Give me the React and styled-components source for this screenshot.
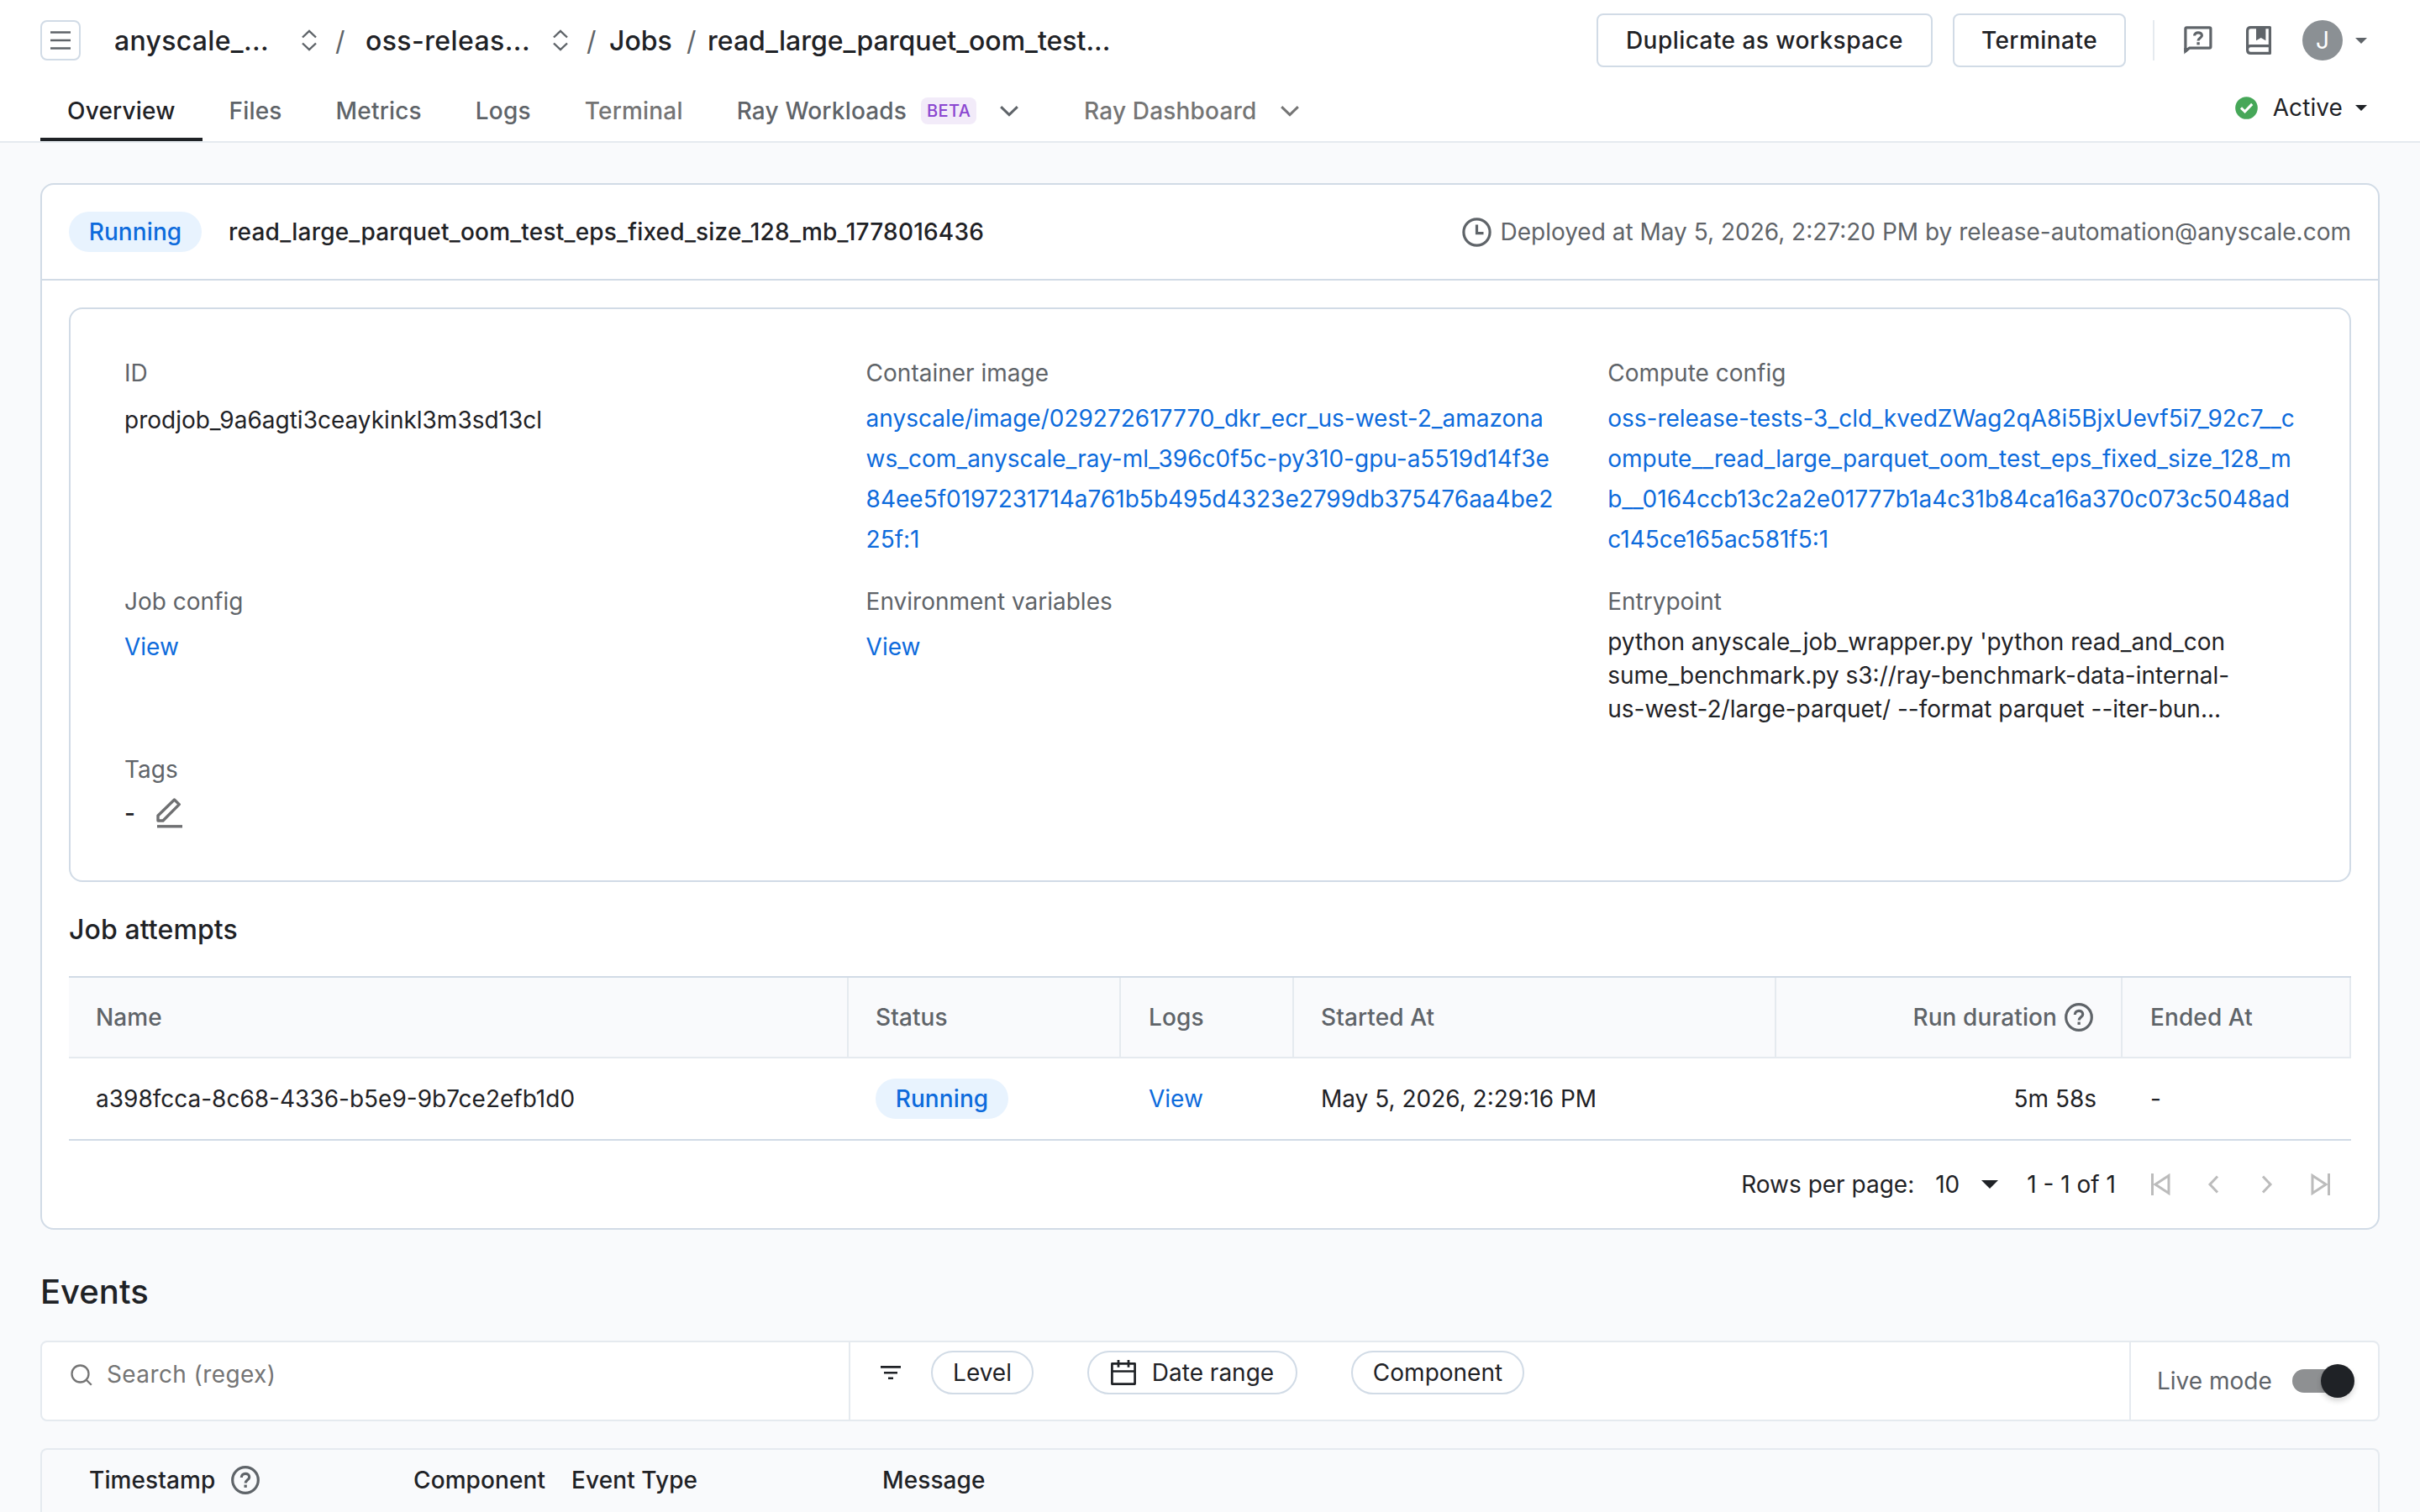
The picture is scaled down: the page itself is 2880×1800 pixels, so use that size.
import React from "react";
import styled, { createGlobalStyle } from "styled-components";

const c = {
  ink: "#1f2226",
  muted: "#5f6469",
  faint: "#757575",
  link: "#0d6bdc",
  line: "#d1dbe6",
  soft: "#e5eaef",
  bg: "#f9fafc",
};

const GlobalStyle = createGlobalStyle`
  * { box-sizing: border-box; }
  body {
    margin: 0;
    background: ${c.bg};
    color: ${c.ink};
    font-family: Inter, "Liberation Sans", sans-serif;
    font-size: 28px;
    line-height: 40px;
    letter-spacing: 0;
    -webkit-font-smoothing: antialiased;
  }
  svg { display: block; flex: none; }
`;

const Page = styled.div`
  width: 2880px;
  height: 1800px;
  overflow: hidden;
  display: flex;
  flex-direction: column;
`;

/* ---------- header ---------- */
const Header = styled.header`
  height: 170px;
  flex: none;
  background: #fff;
  border-bottom: 2px solid ${c.soft};
  padding: 0 48px;
  display: flex;
  justify-content: space-between;
`;
const HeaderLeft = styled.div`
  display: flex;
  flex-direction: column;
`;
const HeaderRight = styled.div`
  display: flex;
  flex-direction: column;
  align-items: flex-end;
`;
const CrumbBar = styled.div`
  height: 96px;
  display: flex;
  align-items: center;
  font-size: 32px;
  font-weight: 500;
`;
const MenuButton = styled.button`
  width: 48px;
  height: 48px;
  padding: 0;
  margin-right: 40px;
  border: 2px solid ${c.line};
  border-radius: 8px;
  background: #fff;
  display: flex;
  align-items: center;
  justify-content: center;
`;
const Crumb = styled.span`
  width: ${(p) => p.$w}px;
  padding-top: 2px;
  letter-spacing: ${(p) => p.$ls || 0}px;
  white-space: nowrap;
`;
const Slash = styled.span`
  width: ${(p) => p.$w}px;
  padding: 2px 0 0 ${(p) => p.$pad}px;
  color: ${c.muted};
  font-weight: 400;
`;
const Tabs = styled.nav`
  height: 72px;
  display: flex;
`;
const Tab = styled.a`
  height: 72px;
  padding: 4px 32px 0;
  display: flex;
  align-items: center;
  font-weight: 500;
  letter-spacing: 0.18px;
  white-space: nowrap;
  color: ${(p) => (p.$active ? c.ink : p.$disabled ? c.faint : c.muted)};
  border-bottom: 4px solid ${(p) => (p.$active ? c.ink : "transparent")};
`;
const Beta = styled.span`
  height: 32px;
  width: 66px;
  margin-left: 17px;
  display: flex;
  align-items: center;
  justify-content: center;
  border-radius: 8px;
  background: #f2ebf9;
  color: #8a46d0;
  font-size: 20px;
  letter-spacing: 0.4px;
  font-weight: 500;
`;
const TabCaret = styled.span`
  margin: 0 14px 0 28px;
`;
const Actions = styled.div`
  height: 96px;
  display: flex;
  align-items: center;
  padding-right: 15px;
`;
const Button = styled.button`
  height: 64px;
  width: ${(p) => p.$w}px;
  padding: 0;
  margin-right: ${(p) => p.$mr}px;
  border: 2px solid ${c.line};
  border-radius: 8px;
  background: #fff;
  color: ${c.ink};
  font: inherit;
  font-weight: 500;
  letter-spacing: 0.45px;
`;
const Divider = styled.span`
  width: 2px;
  height: 48px;
  margin-right: 35px;
  background: ${c.soft};
`;
const IconSlot = styled.span`
  margin-right: 40px;
`;
const Avatar = styled.span`
  width: 48px;
  height: 48px;
  margin: 0 15px 0 37px;
  border-radius: 50%;
  background: #8b9094;
  color: #fff;
  display: flex;
  align-items: center;
  justify-content: center;
`;
const StatusLine = styled.div`
  height: 64px;
  padding-right: 15px;
  display: flex;
  align-items: center;
`;
const StatusText = styled.span`
  margin: 0 15px 0 18px;
  letter-spacing: 0.1px;
`;

/* ---------- main ---------- */
const Main = styled.main`
  padding: 48px 48px 0;
  display: flex;
  flex-direction: column;
`;
const Card = styled.section`
  height: 1246px;
  border: 2px solid ${c.line};
  border-radius: 16px;
  background: #fff;
`;
const CardHead = styled.div`
  height: 114px;
  padding: 0 32px;
  border-bottom: 2px solid ${c.line};
  display: flex;
  align-items: center;
`;
const Badge = styled.span`
  height: 48px;
  width: 158px;
  display: inline-flex;
  align-items: center;
  justify-content: center;
  border-radius: 24px;
  background: #e8f3fe;
  color: ${c.link};
  font-weight: 500;
  letter-spacing: 0.1px;
`;
const JobTitle = styled.span`
  margin-left: 32px;
  font-weight: 500;
  letter-spacing: 0.2px;
`;
const Deployed = styled.span`
  margin-left: auto;
  display: flex;
  align-items: center;
  gap: 10px;
  color: ${c.muted};
`;
const CardBody = styled.div`
  padding: 32px 32px 0;
`;
const Details = styled.div`
  height: 684px;
  padding: 56px 0 0 64px;
  border: 2px solid ${c.line};
  border-radius: 16px;
  display: grid;
  grid-template-columns: repeat(3, 882.6px);
  grid-template-rows: 240px 168px 120px;
  row-gap: 32px;
  overflow: hidden;
`;
const Field = styled.div`
  white-space: nowrap;
`;
const Label = styled.div`
  color: ${c.muted};
`;
const Value = styled.div`
  margin-top: ${(p) => p.$mt || 0}px;
  display: flex;
  align-items: center;
`;
const Lines = styled.div`
  margin-top: ${(p) => p.$mt || 0}px;
  line-height: ${(p) => p.$lh}px;
  color: ${(p) => (p.$link ? c.link : c.ink)};
  white-space: pre-line;
`;
const Dash = styled.span`
  width: 38px;
  font-weight: 500;
`;
const SubHeading = styled.h2`
  margin: 36px 0 34px;
  font-size: 32px;
  line-height: 42px;
  font-weight: 500;
  letter-spacing: 0.1px;
`;
const COLS = "928px 324px 206px 574px 412px 272px";
const TableHead = styled.div`
  height: 98px;
  display: grid;
  grid-template-columns: ${COLS};
  background: ${c.bg};
  border-top: 2px solid ${c.line};
  border-bottom: 2px solid ${c.soft};
`;
const HeadCell = styled.div`
  padding: 0 33px 0 ${(p) => p.$pl || 32}px;
  border-right: 2px solid ${c.soft};
  color: ${c.muted};
  font-weight: 500;
  letter-spacing: 0.1px;
  display: flex;
  align-items: center;
  gap: 9px;
  justify-content: ${(p) => (p.$right ? "flex-end" : "flex-start")};
`;
const TableRow = styled.div`
  height: 98px;
  display: grid;
  grid-template-columns: ${COLS};
  border-bottom: 2px solid ${c.line};
`;
const Cell = styled.div`
  padding: 0 31px 0 ${(p) => p.$pl || 32}px;
  display: flex;
  align-items: center;
  color: ${(p) => (p.$link ? c.link : c.ink)};
  justify-content: ${(p) => (p.$right ? "flex-end" : "flex-start")};
`;
const Pager = styled.div`
  height: 104px;
  display: flex;
  align-items: center;
  justify-content: flex-end;
  padding-right: 25px;
`;
const PagerText = styled.span`
  margin: 0 ${(p) => p.$mr}px 0 ${(p) => p.$ml || 0}px;
`;
const PagerIcons = styled.div`
  display: grid;
  grid-template-columns: 67px 64px 59px 23px;
  align-items: center;
`;

/* ---------- events ---------- */
const Title = styled.h1`
  margin: 49px 0 33px;
  font-size: 40px;
  line-height: 50px;
  font-weight: 500;
`;
const FilterBar = styled.div`
  height: 96px;
  border: 2px solid ${c.soft};
  border-radius: 8px;
  background: #fff;
  display: flex;
`;
const SearchBox = styled.div`
  width: 962px;
  height: 100%;
  border-right: 2px solid ${c.soft};
  padding: 18px 0 0 34px;
  display: flex;
  align-items: flex-start;
  gap: 17px;
  color: ${c.faint};
  letter-spacing: 0.4px;
`;
const SearchIconBox = styled.span`
  padding-top: 8px;
`;
const Filters = styled.div`
  flex: 1;
  padding: 10px 0 0 36px;
  display: flex;
  align-items: flex-start;
`;
const FilterIconBox = styled.span`
  height: 52px;
  display: flex;
  align-items: center;
  margin-right: 36px;
`;
const Pill = styled.span`
  width: ${(p) => p.$w}px;
  height: 52px;
  margin-right: 64px;
  border: 2px solid ${c.line};
  border-radius: 26px;
  display: flex;
  align-items: center;
  justify-content: center;
  gap: 19px;
`;
const LiveMode = styled.div`
  width: 296px;
  border-left: 2px solid ${c.soft};
  padding: 0 0 0 31px;
  display: flex;
  align-items: center;
  color: ${c.muted};
`;
const Track = styled.span`
  width: 68px;
  height: 28px;
  margin-left: 24px;
  border-radius: 14px;
  background: #8e9092;
  display: flex;
  align-items: center;
  justify-content: flex-end;
`;
const Thumb = styled.span`
  width: 40px;
  height: 40px;
  flex: none;
  margin-right: -6px;
  border-radius: 50%;
  background: ${c.ink};
  box-shadow: 0 4px 6px rgba(0, 0, 0, 0.16);
`;
const EventsHead = styled.div`
  height: 96px;
  margin-top: 32px;
  border: 2px solid ${c.soft};
  border-bottom: 0;
  border-radius: 8px 8px 0 0;
  padding: 16px 0 0 56px;
  display: flex;
  align-items: flex-start;
  font-weight: 500;
  letter-spacing: 0.1px;
`;
const EventsCell = styled.div`
  width: ${(p) => p.$w}px;
  display: flex;
  align-items: center;
  gap: 19px;
`;

/* ---------- icons ---------- */
const MenuIcon = () => (
  <svg width="24" height="24" viewBox="0 0 24 24" stroke={c.muted} strokeWidth="2.6">
    <path d="M0 2.5h24M0 12h24M0 21.5h24" />
  </svg>
);
const Sort = () => (
  <svg width="18" height="26" viewBox="0 0 18 26" fill="none" stroke={c.muted} strokeWidth="2.4">
    <path d="M1 9.5 9 1.8l8 7.7M1 16.5l8 7.7 8-7.7" />
  </svg>
);
const Down = ({ color }) => (
  <svg width="22" height="13" viewBox="0 0 22 13" fill="none" stroke={color} strokeWidth="3">
    <path d="M1.2 1.2l9.8 9.4 9.8-9.4" />
  </svg>
);
const Caret = ({ color, w = 14, h = 7 }) => (
  <svg width={w} height={h} viewBox="0 0 14 7" preserveAspectRatio="none" fill={color}>
    <path d="M0 0h14L7 7z" />
  </svg>
);
const HelpBubble = () => (
  <svg width="34" height="34" viewBox="0 0 34 34" fill="none" stroke={c.muted} strokeWidth="3.2" strokeLinejoin="round">
    <path d="M1.9 30V3.2q0-1.4 1.4-1.4h27.2q1.4 0 1.4 1.4v21.6q0 1.4-1.4 1.4H6.4z" />
    <path d="M.3 33.4V26h8z" fill={c.muted} stroke="none" />
    <path d="M12.6 11.6c0-5 8.8-5 8.8-.3 0 3-4.4 3-4.4 6.3" />
    <path d="M15.4 19.2h3.4v3.2h-3.4z" fill={c.muted} stroke="none" />
  </svg>
);
const BookIcon = () => (
  <svg width="30" height="34" viewBox="0 0 30 34" fill="none" stroke={c.muted} strokeWidth="3.2" strokeLinejoin="round">
    <path d="M28.4 23.6V1.6H5.500Q1.6 1.6 1.6 5.5V28.5Q1.6 32.4 5.5 32.4H28.4V23.6H5.5Q1.6 23.6 1.6 27.5" />
    <path d="M12 1h11.4v16.2L17.7 14 12 17.2z" fill={c.muted} stroke="none" />
  </svg>
);
const CheckCircle = () => (
  <svg width="27" height="27" viewBox="0 0 27 27">
    <circle cx="13.5" cy="13.5" r="13.3" fill="#46a758" />
    <path d="M7 13.4l4.6 4.5 8.6-9" fill="none" stroke="#fff" strokeWidth="3" />
  </svg>
);
const Clock = () => (
  <svg width="35" height="35" viewBox="0 0 35 35" fill="none" stroke={c.muted} strokeWidth="3.2">
    <circle cx="17.5" cy="17.5" r="15.6" />
    <path d="M17.5 8.5v10.2h8" />
  </svg>
);
const HelpCircle = () => (
  <svg width="34" height="34" viewBox="0 0 34 34" fill="none" stroke={c.muted} strokeWidth="3.2">
    <circle cx="17" cy="17" r="15.3" />
    <path d="M12.3 14c0-6.2 9.4-6 9.4-.6 0 3.3-4.5 3.4-4.5 7.2" />
    <path d="M15.5 22.6h3.3v3.3h-3.3z" fill={c.muted} stroke="none" />
  </svg>
);
const Pencil = () => (
  <svg width="32" height="36" viewBox="0 0 32 36" fill="none" stroke="#6f7072" strokeWidth="3.4" strokeLinejoin="round">
    <path d="M2 27V21L21.5 2 27.3 7.6 8 27z" />
    <path d="M1 33.8h30" />
  </svg>
);
const First = ({ flip }) => (
  <svg width="23" height="26" viewBox="0 0 23 26" fill="none" stroke="#bcbcbc" strokeWidth="3">
    <path d={flip ? "M21.5 0v26M2 2.5v21L18 13z" : "M1.5 0v26M21 2.5v21L5 13z"} />
  </svg>
);
const Chev = ({ flip }) => (
  <svg width="14" height="22" viewBox="0 0 14 22" fill="none" stroke="#bcbcbc" strokeWidth="3">
    <path d={flip ? "M2 1.5L11 11l-9 9.5" : "M12 1.5L3 11l9 9.5"} />
  </svg>
);
const SearchIcon = () => (
  <svg width="26" height="26" viewBox="0 0 26 26" fill="none" stroke={c.faint} strokeWidth="2.3">
    <circle cx="11.5" cy="11.5" r="10" />
    <path d="M18.5 18.5l6.3 6.3" />
  </svg>
);
const FilterIcon = () => (
  <svg width="24" height="17" viewBox="0 0 24 17" fill={c.ink}>
    <path d="M0 0h24v2.7H0zM4 7h16v2.5H4zM9 13.5h6V16H9z" />
  </svg>
);
const Calendar = () => (
  <svg width="30" height="30" viewBox="0 0 30 30" fill="none" stroke={c.ink} strokeWidth="2.7" strokeLinejoin="round">
    <path d="M1.4 4.4h27.2v24.2H1.4zM1.4 13.5h27.2M9 0v8.8M21 0v8.8" />
  </svg>
);

const IMAGE = `anyscale/image/029272617770_dkr_ecr_us-west-2_amazona
ws_com_anyscale_ray-ml_396c0f5c-py310-gpu-a5519d14f3e
84ee5f0197231714a761b5b495d4323e2799db375476aa4be2
25f:1`;
const COMPUTE = `oss-release-tests-3_cld_kvedZWag2qA8i5BjxUevf5i7_92c7__c
ompute__read_large_parquet_oom_test_eps_fixed_size_128_m
b__0164ccb13c2a2e01777b1a4c31b84ca16a370c073c5048ad
c145ce165ac581f5:1`;
const ENTRY = `python anyscale_job_wrapper.py 'python read_and_con
sume_benchmark.py s3://ray-benchmark-data-internal-
us-west-2/large-parquet/ --format parquet --iter-bun...`;

export default function App() {
  return (
    <>
      <GlobalStyle />
      <Page>
        <Header>
          <HeaderLeft>
            <CrumbBar>
              <MenuButton><MenuIcon /></MenuButton>
              <Crumb $w={223} $ls={0.3}>anyscale_...</Crumb>
              <Sort />
              <Slash $w={58} $pad={22}>/</Slash>
              <Crumb $w={223} $ls={0.4}>oss-releas...</Crumb>
              <Sort />
              <Slash $w={49} $pad={22}>/</Slash>
              <Crumb $w={92}>Jobs</Crumb>
              <Slash $w={25} $pad={0}>/</Slash>
              <Crumb $w={500}>read_large_parquet_oom_test...</Crumb>
            </CrumbBar>
            <Tabs>
              <Tab $active>Overview</Tab>
              <Tab>Files</Tab>
              <Tab>Metrics</Tab>
              <Tab>Logs</Tab>
              <Tab $disabled>Terminal</Tab>
              <Tab>
                Ray Workloads
                <Beta>BETA</Beta>
                <TabCaret><Down color={c.muted} /></TabCaret>
              </Tab>
              <Tab $disabled>
                Ray Dashboard
                <TabCaret><Down color={c.faint} /></TabCaret>
              </Tab>
            </Tabs>
          </HeaderLeft>
          <HeaderRight>
            <Actions>
              <Button $w={400} $mr={24}>Duplicate as workspace</Button>
              <Button $w={206} $mr={32}>Terminate</Button>
              <Divider />
              <IconSlot><HelpBubble /></IconSlot>
              <BookIcon />
              <Avatar>J</Avatar>
              <Caret color={c.muted} />
            </Actions>
            <StatusLine>
              <CheckCircle />
              <StatusText>Active</StatusText>
              <Caret color={c.ink} />
            </StatusLine>
          </HeaderRight>
        </Header>
        <Main>
          <Card>
            <CardHead>
              <Badge>Running</Badge>
              <JobTitle>read_large_parquet_oom_test_eps_fixed_size_128_mb_1778016436</JobTitle>
              <Deployed>
                <Clock />
                Deployed at May 5, 2026, 2:27:20 PM by release-automation@anyscale.com
              </Deployed>
            </CardHead>
            <CardBody>
              <Details>
                <Field>
                  <Label>ID</Label>
                  <Value $mt={16}>prodjob_9a6agti3ceaykinkl3m3sd13cl</Value>
                </Field>
                <Field>
                  <Label>Container image</Label>
                  <Lines $link $mt={10} $lh={48}>{IMAGE}</Lines>
                </Field>
                <Field>
                  <Label>Compute config</Label>
                  <Lines $link $mt={10} $lh={48}>{COMPUTE}</Lines>
                </Field>
                <Field>
                  <Label>Job config</Label>
                  <Lines $link $mt={10} $lh={48}>View</Lines>
                </Field>
                <Field>
                  <Label>Environment variables</Label>
                  <Lines $link $mt={10} $lh={48}>View</Lines>
                </Field>
                <Field>
                  <Label>Entrypoint</Label>
                  <Lines $mt={8} $lh={40}>{ENTRY}</Lines>
                </Field>
                <Field>
                  <Label>Tags</Label>
                  <Value $mt={12}><Dash>-</Dash><Pencil /></Value>
                </Field>
              </Details>
              <SubHeading>Job attempts</SubHeading>
              <TableHead>
                <HeadCell>Name</HeadCell>
                <HeadCell>Status</HeadCell>
                <HeadCell $pl={33}>Logs</HeadCell>
                <HeadCell>Started At</HeadCell>
                <HeadCell $right>Run duration <HelpCircle /></HeadCell>
                <HeadCell $pl={33}>Ended At</HeadCell>
              </TableHead>
              <TableRow>
                <Cell>a398fcca-8c68-4336-b5e9-9b7ce2efb1d0</Cell>
                <Cell><Badge>Running</Badge></Cell>
                <Cell $link $pl={33}>View</Cell>
                <Cell>May 5, 2026, 2:29:16 PM</Cell>
                <Cell $right>5m 58s</Cell>
                <Cell $pl={33}>-</Cell>
              </TableRow>
              <Pager>
                <PagerText $mr={25}>Rows per page:</PagerText>
                <PagerText $mr={26}>10</PagerText>
                <Caret color={c.ink} w={20} h={10} />
                <PagerText $ml={34} $mr={42}>1 - 1 of 1</PagerText>
                <PagerIcons>
                  <First />
                  <Chev />
                  <Chev flip />
                  <First flip />
                </PagerIcons>
              </Pager>
            </CardBody>
          </Card>
          <Title>Events</Title>
          <FilterBar>
            <SearchBox>
              <SearchIconBox><SearchIcon /></SearchIconBox>
              Search (regex)
            </SearchBox>
            <Filters>
              <FilterIconBox><FilterIcon /></FilterIconBox>
              <Pill $w={122}>Level</Pill>
              <Pill $w={250}><Calendar />Date range</Pill>
              <Pill $w={206}>Component</Pill>
            </Filters>
            <LiveMode>
              Live mode
              <Track><Thumb /></Track>
            </LiveMode>
          </FilterBar>
          <EventsHead>
            <EventsCell $w={386}>Timestamp <HelpCircle /></EventsCell>
            <EventsCell $w={188}>Component</EventsCell>
            <EventsCell $w={370}>Event Type</EventsCell>
            <EventsCell $w={300}>Message</EventsCell>
          </EventsHead>
        </Main>
      </Page>
    </>
  );
}
